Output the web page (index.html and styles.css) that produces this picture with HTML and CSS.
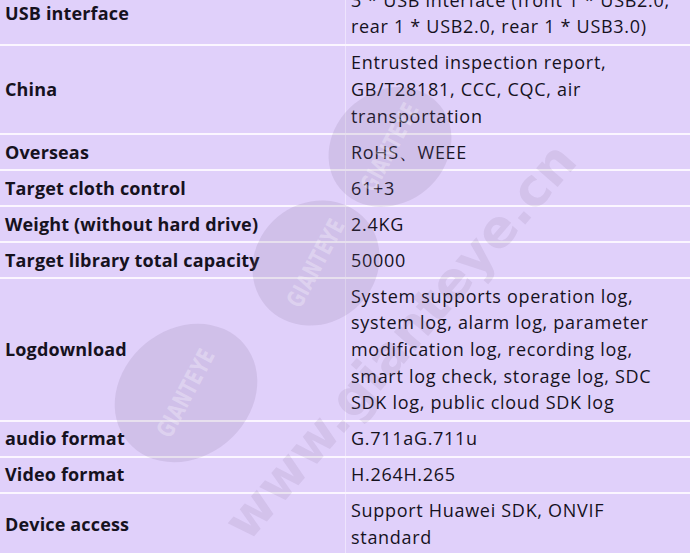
FILE: index.html
```html
<!DOCTYPE html>
<html lang="en">
<head>
    <meta charset="UTF-8">
    <meta name="viewport" content="width=device-width, initial-scale=1.0">
    <title>Specifications</title>
    <link rel="stylesheet" href="styles.css">
</head>
<body>
    <div class="spec-wrap">
        <table class="spec-table">
            <tr>
                <th>USB interface</th>
                <td>3 * USB interface (front 1 * USB2.0, rear 1 * USB2.0, rear 1 * USB3.0)</td>
            </tr>
            <tr>
                <th>China</th>
                <td>Entrusted inspection report, GB/T28181, CCC, CQC, air transportation</td>
            </tr>
            <tr>
                <th>Overseas</th>
                <td>RoHS、WEEE</td>
            </tr>
            <tr>
                <th>Target cloth control</th>
                <td>61+3</td>
            </tr>
            <tr>
                <th>Weight (without hard drive)</th>
                <td>2.4KG</td>
            </tr>
            <tr>
                <th>Target library total capacity</th>
                <td>50000</td>
            </tr>
            <tr>
                <th>Logdownload</th>
                <td>System supports operation log, system log, alarm log, parameter modification log, recording log, smart log check, storage log, SDC SDK log, public cloud SDK log</td>
            </tr>
            <tr>
                <th>audio format</th>
                <td>G.711aG.711u</td>
            </tr>
            <tr>
                <th>Video format</th>
                <td>H.264H.265</td>
            </tr>
            <tr>
                <th>Device access</th>
                <td>Support Huawei SDK, ONVIF standard</td>
            </tr>
        </table>

        <!-- watermark sits over the table -->
        <div class="watermark">
            <div class="badge badge-1"><span>GIANTEYE</span></div>
            <div class="badge badge-2"><span>GIANTEYE</span></div>
            <div class="badge badge-3"><span>GIANTEYE</span></div>
            <div class="site">www.gianteye.cn</div>
        </div>
    </div>
</body>
</html>
```

FILE: styles.css
```css
body {
    margin: 0;
    padding: 0;
    font-family: "Open Sans", "Noto Sans", sans-serif;
    background-color: #e0d0fa;
    color: #16121e;
    overflow: hidden;
}

.spec-wrap {
    position: relative;
    margin-top: -17px;
}

.spec-table {
    width: 690px;
    table-layout: fixed;
    border-collapse: collapse;
    background-color: #e0d0fa;
    font-size: 18px;
    line-height: 26.67px;
}

.spec-table th,
.spec-table td {
    padding: 3.67px 5px;
    border-bottom: 2px solid #fbf6ff;
    vertical-align: middle;
    text-align: left;
}

.spec-table th {
    width: 335px;
    font-weight: bold;
    letter-spacing: 0.15px;
    border-right: 1px solid #eee4fd;
}

.spec-table td {
    font-weight: normal;
    letter-spacing: 0.7px;
}

.watermark {
    position: absolute;
    top: -2px;
    left: 0;
    width: 690px;
    height: 600px;
    pointer-events: none;
    overflow: hidden;
}

.badge {
    position: absolute;
    border-radius: 50%;
    background-color: rgba(120, 100, 140, 0.15);
    display: flex;
    align-items: center;
    justify-content: center;
    transform: rotate(-40deg);
}

.badge span {
    display: block;
    color: rgba(255, 255, 255, 0.3);
    font-family: "DejaVu Sans Condensed", "DejaVu Sans", sans-serif;
    font-weight: bold;
    font-size: 24px;
    letter-spacing: 1px;
    transform: rotate(-22deg) scaleX(0.75);
}

.badge-1 {
    left: 325px;
    top: 110px;
    width: 130px;
    height: 112px;
}

.badge-2 {
    left: 250px;
    top: 222px;
    width: 132px;
    height: 120px;
}

.badge-3 {
    left: 110px;
    top: 348px;
    width: 152px;
    height: 128px;
}

.site {
    position: absolute;
    left: 130px;
    top: 330px;
    width: 540px;
    text-align: center;
    font-family: "DejaVu Sans", sans-serif;
    font-weight: bold;
    font-size: 52px;
    color: rgba(120, 100, 140, 0.13);
    transform: rotate(-49deg);
    white-space: nowrap;
}
```
